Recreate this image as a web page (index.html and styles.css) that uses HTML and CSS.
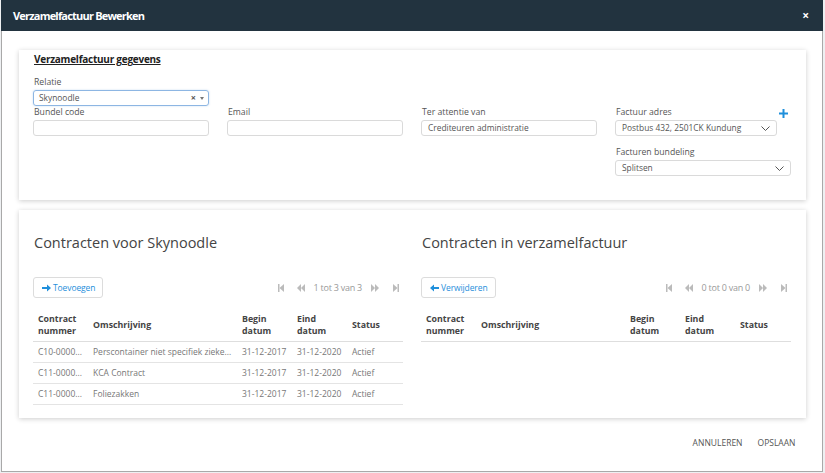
FILE: index.html
```html
<!DOCTYPE html>
<html lang="nl">
<head>
<meta charset="utf-8">
<title>Verzamelfactuur Bewerken</title>
<link rel="stylesheet" href="styles.css">
</head>
<body>
<div class="modal">
  <header class="modal-header">
    <span class="modal-title">Verzamelfactuur Bewerken</span>
    <span class="modal-close">×</span>
  </header>
  <div class="modal-body">
    <section class="card card-details">
      <h2 class="card-title">Verzamelfactuur gegevens</h2>
      <div class="field field-relatie">
        <label class="label">Relatie</label>
        <div class="control select select-focus">
          <span>Skynoodle</span>
          <span class="sel-icons"><span class="sel-clear">×</span><span class="sel-caret"></span></span>
        </div>
      </div>
      <div class="grid4">
        <div class="field">
          <label class="label">Bundel code</label>
          <div class="control"></div>
        </div>
        <div class="field">
          <label class="label">Email</label>
          <div class="control"></div>
        </div>
        <div class="field">
          <label class="label">Ter attentie van</label>
          <div class="control">Crediteuren administratie</div>
        </div>
        <div class="stack">
          <div class="field">
            <div class="label-row">
              <label class="label">Factuur adres</label>
              <svg class="plus" width="9" height="9" viewBox="0 0 9 9"><path d="M3.5 0h2v3.5H9v2H5.5V9h-2V5.5H0v-2h3.5z" fill="#1f8fdb"/></svg>
            </div>
            <div class="control select select-narrow">
              <span>Postbus 432, 2501CK Kundung</span>
              <svg width="9" height="5" viewBox="0 0 9 5"><path d="M0.5 0.5L4.5 4.5L8.5 0.5" fill="none" stroke="#555" stroke-width="1"/></svg>
            </div>
          </div>
          <div class="field field-gap">
            <label class="label">Facturen bundeling</label>
            <div class="control select">
              <span>Splitsen</span>
              <svg width="9" height="5" viewBox="0 0 9 5"><path d="M0.5 0.5L4.5 4.5L8.5 0.5" fill="none" stroke="#555" stroke-width="1"/></svg>
            </div>
          </div>
        </div>
      </div>
    </section>

    <section class="card card-contracts">
      <div class="panel">
        <h3 class="panel-title">Contracten voor Skynoodle</h3>
        <div class="toolbar">
          <button class="btn">
            <svg width="9" height="8" viewBox="0 0 9 8"><path d="M0 3h5V0.5L9 4 5 7.5V5H0z" fill="#1f8fdb"/></svg>
            <span>Toevoegen</span>
          </button>
          <div class="pager">
            <svg class="pg pg-first" width="6" height="8" viewBox="0 0 6 8"><rect width="1.5" height="8"/><path d="M6 0L1.5 4L6 8z"/></svg>
            <svg class="pg pg-prev" width="8" height="8" viewBox="0 0 8 8"><path d="M4 0L0 4l4 4zM8 0L4 4l4 4z"/></svg>
            <span class="pg-text">1 tot 3 van 3</span>
            <svg class="pg pg-next" width="8" height="8" viewBox="0 0 8 8"><path d="M0 0l4 4-4 4zM4 0l4 4-4 4z"/></svg>
            <svg class="pg pg-last" width="6" height="8" viewBox="0 0 6 8"><path d="M0 0l4.5 4L0 8z"/><rect x="4.5" width="1.5" height="8"/></svg>
          </div>
        </div>
        <table class="grid-table">
          <colgroup><col class="c1"><col class="c2"><col class="c3"><col class="c4"><col class="c5"></colgroup>
          <thead>
            <tr><th>Contract<br>nummer</th><th>Omschrijving</th><th>Begin<br>datum</th><th>Eind<br>datum</th><th>Status</th></tr>
          </thead>
          <tbody>
            <tr><td>C10-0000...</td><td>Perscontainer niet specifiek zieke...</td><td>31-12-2017</td><td>31-12-2020</td><td>Actief</td></tr>
            <tr><td>C11-0000...</td><td>KCA Contract</td><td>31-12-2017</td><td>31-12-2020</td><td>Actief</td></tr>
            <tr><td>C11-0000...</td><td>Foliezakken</td><td>31-12-2017</td><td>31-12-2020</td><td>Actief</td></tr>
          </tbody>
        </table>
      </div>
      <div class="panel">
        <h3 class="panel-title">Contracten in verzamelfactuur</h3>
        <div class="toolbar">
          <button class="btn">
            <svg width="9" height="8" viewBox="0 0 9 8"><path d="M9 3H4V0.5L0 4l4 3.5V5h5z" fill="#1f8fdb"/></svg>
            <span>Verwijderen</span>
          </button>
          <div class="pager">
            <svg class="pg pg-first" width="6" height="8" viewBox="0 0 6 8"><rect width="1.5" height="8"/><path d="M6 0L1.5 4L6 8z"/></svg>
            <svg class="pg pg-prev" width="8" height="8" viewBox="0 0 8 8"><path d="M4 0L0 4l4 4zM8 0L4 4l4 4z"/></svg>
            <span class="pg-text">0 tot 0 van 0</span>
            <svg class="pg pg-next" width="8" height="8" viewBox="0 0 8 8"><path d="M0 0l4 4-4 4zM4 0l4 4-4 4z"/></svg>
            <svg class="pg pg-last" width="6" height="8" viewBox="0 0 6 8"><path d="M0 0l4.5 4L0 8z"/><rect x="4.5" width="1.5" height="8"/></svg>
          </div>
        </div>
        <table class="grid-table">
          <colgroup><col class="c1"><col class="c2"><col class="c3"><col class="c4"><col class="c5"></colgroup>
          <thead>
            <tr><th>Contract<br>nummer</th><th>Omschrijving</th><th>Begin<br>datum</th><th>Eind<br>datum</th><th>Status</th></tr>
          </thead>
          <tbody></tbody>
        </table>
      </div>
    </section>
  </div>
  <footer class="modal-footer">
    <button class="link-btn">ANNULEREN</button>
    <button class="link-btn">OPSLAAN</button>
  </footer>
</div>
</body>
</html>
```

FILE: styles.css
```css
* { box-sizing: border-box; }

body {
  margin: 0;
  background: #eef0f2;
  font-family: "Open Sans", "Liberation Sans", sans-serif;
  color: #555;
}

.modal {
  width: 822px;
  height: 472px;
  margin-left: 1px;
  background: #fff;
  border: 1px solid #a9a9a9;
  border-top: 0;
  display: flex;
  flex-direction: column;
}

.modal-header {
  height: 31px;
  margin: 0 -1px;
  background: #22333f;
  color: #fff;
  display: flex;
  align-items: center;
  justify-content: space-between;
  padding: 0 14px 0 12px;
}

.modal-title {
  font-size: 11px;
  font-weight: 700;
  letter-spacing: -0.8px;
}

.modal-close {
  font-size: 12px;
  font-weight: 700;
  line-height: 1;
}

.modal-body {
  padding: 19px 16px 0 17px;
}

.card {
  background: #fff;
  box-shadow: 0 1px 5px rgba(0, 0, 0, 0.2);
}

.card-details {
  height: 150px;
  padding: 2px 15px 0 14px;
}

.card-title {
  margin: 0 0 10px 1px;
  font-size: 10px;
  font-weight: 700;
  line-height: 14px;
  letter-spacing: -0.25px;
  color: #222;
  text-decoration: underline;
}

.field { display: flex; flex-direction: column; }
.field-relatie { width: 176px; }
.field-gap { margin-top: 10px; }

.label {
  display: block;
  padding-left: 1px;
  margin-bottom: 1px;
  font-size: 8.7px;
  line-height: 13px;
  color: #555;
}

.label-row {
  display: flex;
  align-items: center;
  justify-content: space-between;
  padding-right: 3px;
}

.control {
  height: 16px;
  border: 1px solid #dadada;
  border-radius: 3px;
  padding: 0 6px;
  font-size: 8.4px;
  line-height: 14px;
  color: #555;
  white-space: nowrap;
}

.select {
  display: flex;
  align-items: center;
  justify-content: space-between;
  padding-right: 6px;
}

.select-focus {
  border-color: #8db6e3;
  box-shadow: 0 0 2px rgba(80, 140, 210, 0.35);
  padding-left: 5px;
  padding-right: 4px;
}

.select-narrow { width: 162px; }

.sel-icons { display: flex; align-items: center; gap: 4px; }
.sel-clear { font-size: 9px; font-weight: 700; color: #555; }
.sel-caret {
  width: 0; height: 0;
  border-left: 2.5px solid transparent;
  border-right: 2.5px solid transparent;
  border-top: 3px solid #777;
}

.grid4 {
  display: grid;
  grid-template-columns: repeat(4, 176px);
  column-gap: 18px;
}

.card-contracts {
  margin-top: 10px;
  height: 208px;
  padding: 23px 15px 0 14px;
  display: grid;
  grid-template-columns: 370px 370px;
  column-gap: 18px;
  align-items: start;
}

.panel-title {
  margin: 0 0 24px 1px;
  font-size: 14.5px;
  font-weight: 400;
  line-height: 20px;
  color: #444;
}

.toolbar {
  display: flex;
  align-items: center;
  justify-content: space-between;
  height: 21px;
}

.btn {
  height: 21px;
  display: flex;
  align-items: center;
  gap: 2px;
  padding: 0 7px 0 8px;
  background: #fff;
  border: 1px solid #dcdcdc;
  border-radius: 3px;
  font-family: inherit;
  font-size: 8.5px;
  letter-spacing: -0.1px;
  color: #1f8fdb;
}

.pager {
  display: flex;
  align-items: center;
  padding-right: 4px;
  fill: #bbb;
}

.pg-prev { margin-left: 13px; }
.pg-text { margin: 0 9px; font-size: 9px; letter-spacing: -0.25px; color: #999; }
.pg-last { margin-left: 14px; }

.grid-table {
  width: 100%;
  margin-top: 11px;
  border-collapse: collapse;
  table-layout: fixed;
}

.grid-table col.c1 { width: 55px; }
.grid-table col.c2 { width: 149px; }
.grid-table col.c3 { width: 55px; }
.grid-table col.c4 { width: 55px; }

.grid-table th {
  padding: 4px 5px;
  font-size: 8.8px;
  font-weight: 700;
  line-height: 12px;
  color: #444;
  text-align: left;
  vertical-align: middle;
  border-bottom: 1px solid #dedede;
}

.grid-table td {
  height: 21px;
  padding: 0 5px;
  font-size: 8.5px;
  line-height: 20px;
  color: #777;
  white-space: nowrap;
  overflow: hidden;
  border-bottom: 1px solid #e4e4e4;
}

.modal-footer {
  display: flex;
  justify-content: flex-end;
  padding: 19px 19px 0 0;
}

.link-btn {
  background: none;
  border: 0;
  padding: 0 7.5px;
  font-family: inherit;
  font-size: 8.5px;
  line-height: 12px;
  color: #555;
}
```
